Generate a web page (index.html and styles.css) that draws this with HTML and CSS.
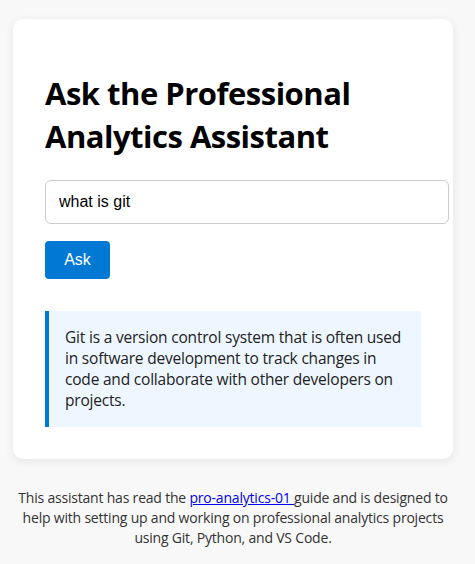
FILE: index.html
```html
<!DOCTYPE html>
<html lang="en">
<head>
<meta charset="utf-8">
<title>Ask the Professional Analytics Assistant</title>
<link rel="stylesheet" href="styles.css">
</head>
<body>
<main class="page">
  <section class="card">
    <h1 class="title">Ask the Professional Analytics Assistant</h1>
    <form class="ask-form">
      <input class="question" type="text" value="what is git">
      <button class="ask-btn" type="button">Ask</button>
    </form>
    <div class="answer">Git is a version control system that is often used in software development to track changes in code and collaborate with other developers on projects.</div>
  </section>
  <p class="footer">This assistant has read the <a href="#">pro-analytics-01 </a>guide and is designed to help with setting up and working on professional analytics projects using Git, Python, and VS Code.</p>
</main>
</body>
</html>
```
FILE: styles.css
```css
html, body {
  margin: 0;
  padding: 0;
  background: #f8f8f8;
}
body {
  font-family: "Open Sans", "Noto Sans", sans-serif;
  color: #222;
}
.page {
  width: 440px;
  margin-left: 13px;
  padding-top: 19px;
}
.card {
  background: #fff;
  border-radius: 10px;
  box-shadow: 0 2px 10px rgba(0, 0, 0, 0.08);
  padding: 32px;
}
.title {
  font-size: 31px;
  letter-spacing: -0.5px;
  font-weight: 700;
  line-height: 43px;
  margin: 21px 0 22px;
  color: #000;
}
.ask-form {
  display: flex;
  flex-direction: column;
  align-items: flex-start;
  gap: 17px;
}
.question {
  box-sizing: border-box;
  width: 404px;
  height: 44px;
  padding: 12px 13px;
  border: 1px solid #ccc;
  border-radius: 6px;
  font-family: "Liberation Sans", Arial, sans-serif;
  font-size: 16px;
  color: #000;
  background: #fff;
  margin: 0;
}
.ask-btn {
  background: #0078d4;
  color: #fff;
  border: none;
  border-radius: 4px;
  font-family: "Liberation Sans", Arial, sans-serif;
  font-size: 16px;
  width: 65px;
  height: 38px;
  padding: 0;
}
.answer {
  margin-top: 32px;
  background: #eef7ff;
  border-left: 4px solid #0078d4;
  padding: 16px;
  font-size: 15.5px;
  letter-spacing: -0.2px;
  line-height: 21px;
  color: #222;
}
.footer {
  text-align: center;
  font-size: 14px;
  letter-spacing: -0.2px;
  line-height: 20px;
  margin: 29px 0 0;
  color: #333;
}
.footer a {
  color: #0000ee;
}
```
